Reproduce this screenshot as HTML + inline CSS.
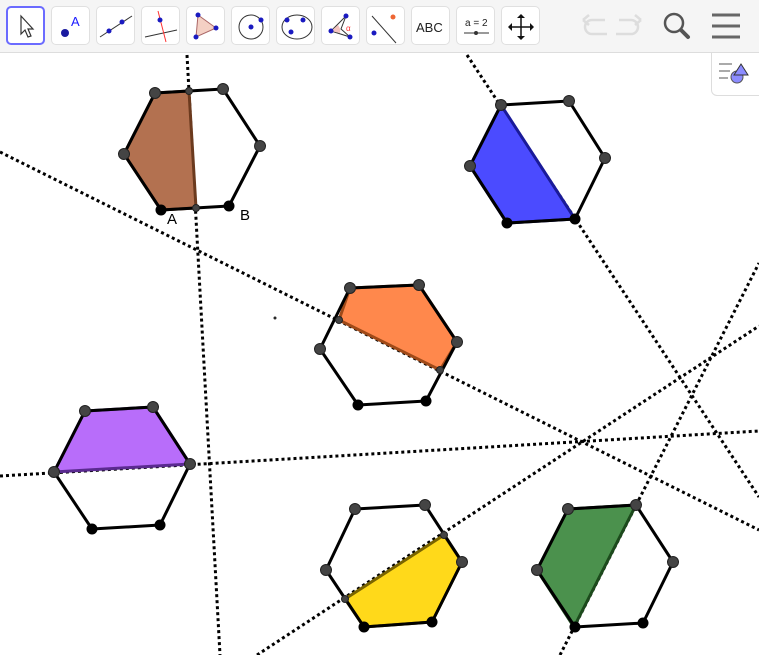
<!DOCTYPE html>
<html><head><meta charset="utf-8"><style>
*{margin:0;padding:0;box-sizing:border-box}
body{width:759px;height:655px;overflow:hidden;background:#fff;font-family:"Liberation Sans",sans-serif;position:relative}
#tb{position:absolute;left:0;top:0;width:759px;height:53px;background:#f5f5f5;border-bottom:1px solid #ddd}
.b{position:absolute;top:6px;width:39px;height:39px;background:#fff;border:1px solid #e0e0e0;border-radius:5px}
.b svg{position:absolute;left:0;top:0}
#sp{position:absolute;left:711px;top:53px;width:50px;height:43px;background:#fff;border:1px solid #ddd;border-top:none;border-radius:0 0 0 6px}
</style></head><body>
<svg width="759" height="655" style="position:absolute;left:0;top:0">
<g stroke="#000" stroke-width="3" stroke-dasharray="3 3" fill="none">
<line x1="187" y1="55" x2="220" y2="655"/>
<line x1="467" y1="55" x2="759" y2="497"/>
<line x1="0" y1="152" x2="759" y2="530"/>
<line x1="0" y1="476" x2="759" y2="431"/>
<line x1="257" y1="655" x2="759" y2="326"/>
<line x1="560" y1="655" x2="759" y2="263"/>
</g>
<g stroke-width="3" stroke-linejoin="round">
<polygon points="155,93 189,91 196,208 161,210 124,154" fill="#b37150" stroke="#6b3a1e"/>
<polygon points="501,105 575,219 507,223 470,166" fill="#4b4bff" stroke="#1a1a99"/>
<polygon points="350,288 419,285 457,342 440,370 339,320" fill="#ff884c" stroke="#a04a18"/>
<polygon points="85,411 153,407 190,464 54,472" fill="#b86dfa" stroke="#5a2a90"/>
<polygon points="444,535 462,562 432,622 364,627 345,599" fill="#ffd91a" stroke="#7a6400"/>
<polygon points="568,509 636,505 574,627 537,570" fill="#4b914d" stroke="#1c4a1c"/>
</g>
<g stroke="#000" stroke-width="3" fill="none" stroke-linejoin="round">
<polygon points="155,93 223,89 260,146 229,206 161,210 124,154"/>
<polygon points="501,105 569,101 605,158 575,219 507,223 470,166"/>
<polygon points="350,288 419,285 457,342 426,401 358,405 320,349"/>
<polygon points="85,411 153,407 190,464 160,525 92,529 54,472"/>
<polygon points="355,509 425,505 462,562 432,622 364,627 326,570"/>
<polygon points="568,509 636,505 673,562 643,623 575,627 537,570"/>
</g>
<g fill="#444" stroke="#222" stroke-width="1">
<circle cx="155" cy="93" r="5.5"/><circle cx="223" cy="89" r="5.5"/><circle cx="260" cy="146" r="5.5"/><circle cx="124" cy="154" r="5.5"/>
<circle cx="501" cy="105" r="5.5"/><circle cx="569" cy="101" r="5.5"/><circle cx="605" cy="158" r="5.5"/><circle cx="470" cy="166" r="5.5"/>
<circle cx="350" cy="288" r="5.5"/><circle cx="419" cy="285" r="5.5"/><circle cx="457" cy="342" r="5.5"/><circle cx="320" cy="349" r="5.5"/>
<circle cx="85" cy="411" r="5.5"/><circle cx="153" cy="407" r="5.5"/><circle cx="190" cy="464" r="5.5"/><circle cx="54" cy="472" r="5.5"/>
<circle cx="355" cy="509" r="5.5"/><circle cx="425" cy="505" r="5.5"/><circle cx="462" cy="562" r="5.5"/><circle cx="326" cy="570" r="5.5"/>
<circle cx="568" cy="509" r="5.5"/><circle cx="636" cy="505" r="5.5"/><circle cx="673" cy="562" r="5.5"/><circle cx="537" cy="570" r="5.5"/>
<circle cx="189" cy="91" r="3.5"/><circle cx="196" cy="208" r="3.5"/><circle cx="440" cy="370" r="3.5"/><circle cx="339" cy="320" r="3.5"/>
<circle cx="444" cy="535" r="3.5"/><circle cx="345" cy="599" r="3.5"/><circle cx="275" cy="318" r="1"/>
</g>
<g fill="#000">
<circle cx="161" cy="210" r="5.5"/><circle cx="229" cy="206" r="5.5"/>
<circle cx="507" cy="223" r="5.5"/><circle cx="575" cy="219" r="5.5"/>
<circle cx="358" cy="405" r="5.5"/><circle cx="426" cy="401" r="5.5"/>
<circle cx="92" cy="529" r="5.5"/><circle cx="160" cy="525" r="5.5"/>
<circle cx="364" cy="627" r="5.5"/><circle cx="432" cy="622" r="5.5"/>
<circle cx="575" cy="627" r="5.5"/><circle cx="643" cy="623" r="5.5"/>
</g>
<text x="167" y="224" font-size="15" font-family="Liberation Sans">A</text>
<text x="240" y="220" font-size="15" font-family="Liberation Sans">B</text>
</svg>
<div id="tb">
<div class="b" style="left:6px;border:2px solid #6b6bff"><svg width="37" height="37"><path d="M13 8 L13 26 L17 22 L20 29 L23 28 L20 21 L25 21 Z" fill="#fff" stroke="#333" stroke-width="1.2"/></svg></div>
<div class="b" style="left:51px"><svg width="39" height="39"><circle cx="13" cy="26" r="4" fill="#1a1aa0"/><text x="19" y="19" font-size="13" fill="#1a1aff" font-family="Liberation Sans">A</text></svg></div>
<div class="b" style="left:96px"><svg width="39" height="39"><line x1="3" y1="30" x2="35" y2="9" stroke="#333"/><circle cx="12" cy="24" r="2.5" fill="#1a1ac0"/><circle cx="25" cy="15" r="2.5" fill="#1a1ac0"/></svg></div>
<div class="b" style="left:141px"><svg width="39" height="39"><line x1="3" y1="30" x2="35" y2="23" stroke="#333"/><line x1="16" y1="4" x2="24" y2="35" stroke="#f33"/><circle cx="18" cy="13" r="2.5" fill="#1a1ac0"/></svg></div>
<div class="b" style="left:186px"><svg width="39" height="39"><polygon points="11,8 29,21 9,30" fill="#f4d0c4" stroke="#a66"/><circle cx="11" cy="8" r="2.5" fill="#1a1ac0"/><circle cx="29" cy="21" r="2.5" fill="#1a1ac0"/><circle cx="9" cy="30" r="2.5" fill="#1a1ac0"/></svg></div>
<div class="b" style="left:231px"><svg width="39" height="39"><circle cx="19" cy="20" r="12" fill="none" stroke="#333"/><circle cx="19" cy="20" r="2.5" fill="#1a1ac0"/><circle cx="29" cy="13" r="2.5" fill="#1a1ac0"/></svg></div>
<div class="b" style="left:276px"><svg width="39" height="39"><ellipse cx="20" cy="20" rx="15" ry="12" fill="none" stroke="#333"/><circle cx="10" cy="13" r="2.5" fill="#1a1ac0"/><circle cx="26" cy="13" r="2.5" fill="#1a1ac0"/><circle cx="14" cy="25" r="2.5" fill="#1a1ac0"/></svg></div>
<div class="b" style="left:321px"><svg width="39" height="39"><polygon points="9,24 24,9 19,22 28,30" fill="none" stroke="#333"/><path d="M9 24 L16 18 Q19 22 18 26 Z" fill="#f4c4c0"/><circle cx="24" cy="9" r="2.5" fill="#1a1ac0"/><circle cx="9" cy="24" r="2.5" fill="#1a1ac0"/><circle cx="28" cy="30" r="2.5" fill="#1a1ac0"/><text x="24" y="24" font-size="8" fill="#f33">α</text></svg></div>
<div class="b" style="left:366px"><svg width="39" height="39"><line x1="5" y1="9" x2="29" y2="36" stroke="#333"/><circle cx="7" cy="26" r="2.5" fill="#1a1ac0"/><circle cx="26" cy="10" r="2.5" fill="#e63"/></svg></div>
<div class="b" style="left:411px"><svg width="39" height="39"><text x="4" y="25" font-size="13" fill="#222" font-family="Liberation Sans">ABC</text></svg></div>
<div class="b" style="left:456px"><svg width="39" height="39"><text x="8" y="19" font-size="10" fill="#222" font-family="Liberation Sans">a = 2</text><line x1="7" y1="26" x2="32" y2="26" stroke="#333"/><circle cx="19" cy="26" r="2" fill="#333"/></svg></div>
<div class="b" style="left:501px"><svg width="39" height="39"><path d="M19 9 V31 M8 20 H30" stroke="#111" stroke-width="1.5"/><path d="M19 7 l-4 4 h8z M19 33 l-4 -4 h8z M6 20 l4 -4 v8z M32 20 l-4 -4 v8z" fill="#111"/></svg></div>
<svg width="130" height="53" style="position:absolute;left:575px;top:0">
<path d="M32 34 H17 a7 7 0 0 1 0 -14 H30 M8 20 l6 -5 M8 20 l6 5" fill="none" stroke="#ddd" stroke-width="2.5"/>
<path d="M41 34 H56 a7 7 0 0 0 0 -14 H44 M66 20 l-6 -5 M66 20 l-6 5" fill="none" stroke="#ddd" stroke-width="2.5" transform="translate(0,0)"/>
<circle cx="99" cy="23" r="9" fill="none" stroke="#555" stroke-width="2.5"/><line x1="106" y1="30" x2="113" y2="37" stroke="#555" stroke-width="4" stroke-linecap="round"/>
</svg>
<svg width="40" height="53" style="position:absolute;left:708px;top:0"><path d="M4 15 H32 M4 26 H32 M4 37 H32" stroke="#666" stroke-width="3"/></svg>
</div>
<div id="sp"><svg width="48" height="42"><path d="M7 11 H20 M7 18 H18 M7 25 H16" stroke="#aaa" stroke-width="2"/><circle cx="25" cy="24" r="6" fill="#8c8cff" stroke="#555"/><polygon points="29,11 36,22 22,22" fill="#8c8cff" stroke="#333"/></svg></div>
</body></html>
